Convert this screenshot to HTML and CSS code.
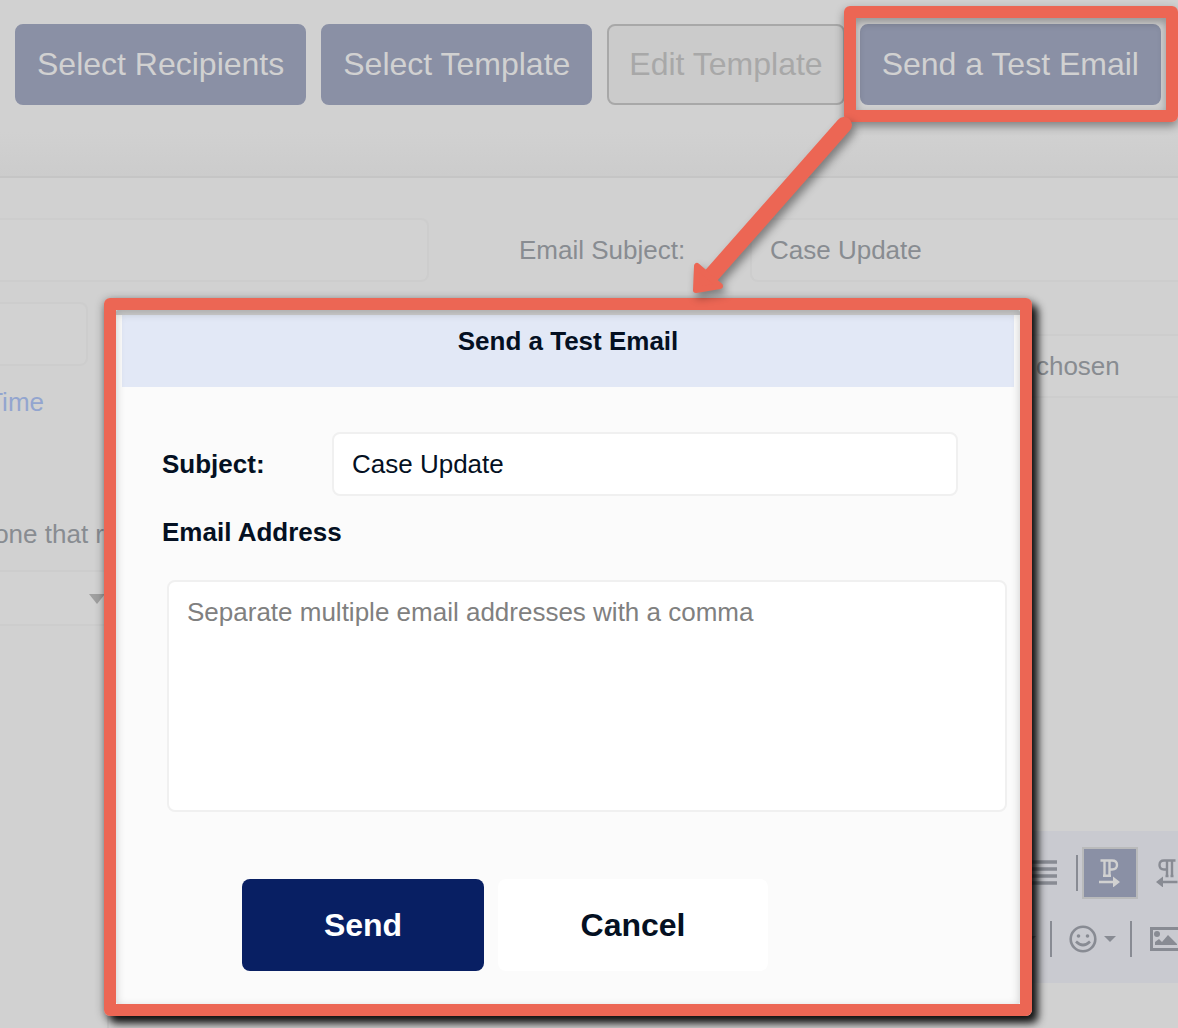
FILE: index.html
```html
<!DOCTYPE html>
<html lang="en">

<head>

<meta charset="utf-8">
<title>Send a Test Email</title>

<link rel="stylesheet" href="styles.css">

</head>

<body>

<div class="page">

   <header class="actions">
      <button class="action" type="button">Select Recipients</button>
      <button class="action" type="button">Select Template</button>
      <button class="action outline" type="button" disabled>Edit Template</button>
      <button class="action" type="button">Send a Test Email</button>
   </header>

   <div class="form">

      <div class="leftcol">
         <input class="field cut" type="text" aria-label="Email name">
         <input class="field cut short" type="text" aria-label="Send date">
         <a class="timelink" href="#">Time</a>
         <label class="note" for="recipient_select">one that r</label>
         <div class="selectwrap">
            <select class="field cut" id="recipient_select"></select>
            <svg class="selectarrow" width="16" height="10" viewBox="0 0 16 10"><path d="M0 0h16l-8 10z"/></svg>
         </div>
      </div>

      <label class="subjectlabel" for="email_subject">Email Subject:</label>

      <div class="rightcol">
         <input class="field open" id="email_subject" type="text" value="Case Update">
         <input class="field open file" type="file" aria-label="Attachment">
      </div>

   </div>

   <div class="editor">
      <div class="toolbar">

         <div class="toolrow">
            <button class="tool" type="button" aria-label="Justify">
               <svg width="28" height="26" viewBox="0 0 28 26"><path d="M0 2h28M0 9h28M0 16h28M0 23h28" fill="none" stroke="currentColor" stroke-width="3.600"/></svg>
            </button>
            <span class="divider"></span>
            <button class="tool active" type="button" aria-label="Left to right">
               <svg width="22" height="28" viewBox="0 0 22 28">
                  <path d="M1.500 1.500h11.500q5 0 5 4.500t-5 4.500h-2M5.500 2v15.500M10.500 2v15.500M4 16.800h8" fill="none" stroke="currentColor" stroke-width="2.400"/>
                  <path d="M0 21.700h14V17.500l7 5.500-7 5.500v-4.200H0z" fill="currentColor"/>
               </svg>
            </button>
            <button class="tool last" type="button" aria-label="Right to left">
               <svg width="22" height="28" viewBox="0 0 22 28">
                  <path d="M19.500 1.500H8Q3.500 1.500 3.500 6T8 10.500h3M11 2v15.500M16 2v15.500M9.500 17h3M14.500 17h3" fill="none" stroke="currentColor" stroke-width="2.400"/>
                  <path d="M21.500 21.700H7V17.500L0 23l7 5.500v-4.200h14.500z" fill="currentColor"/>
               </svg>
            </button>
         </div>

         <div class="toolrow">
            <svg class="caret" width="12" height="6" viewBox="0 0 12 6"><path d="M0 0h12L6 6z"/></svg>
            <span class="divider"></span>
            <button class="tool emoji" type="button" aria-label="Emoticons">
               <svg width="28" height="28" viewBox="0 0 28 28">
                  <circle cx="14" cy="14" r="12.300" fill="none" stroke="currentColor" stroke-width="2.600"/>
                  <circle cx="9.500" cy="11" r="1.800" fill="currentColor"/>
                  <circle cx="18.500" cy="11" r="1.800" fill="currentColor"/>
                  <path d="M7 16.500q7 7 14 0" fill="none" stroke="currentColor" stroke-width="2.600"/>
               </svg>
               <svg class="caret" width="12" height="6" viewBox="0 0 12 6"><path d="M0 0h12L6 6z"/></svg>
            </button>
            <span class="divider"></span>
            <button class="tool last" type="button" aria-label="Insert image">
               <svg width="28" height="24" viewBox="0 0 28 24">
                  <path d="M30 1.500H1.500v21H30" fill="none" stroke="currentColor" stroke-width="3"/>
                  <circle cx="7" cy="7" r="3" fill="currentColor"/>
                  <path d="M5 18v-3l4-3 3 3 6-7 9 9v1z" fill="currentColor"/>
               </svg>
            </button>
         </div>

      </div>
   </div>

</div>

<div class="highlight"></div>

<div class="dialog" role="dialog" aria-labelledby="dialog_title">
   <h2 class="title" id="dialog_title">Send a Test Email</h2>

   <form class="dialogform">
      <div class="row">
         <label class="rowlabel" for="test_subject">Subject:</label>
         <input class="textbox" id="test_subject" type="text" value="Case Update">
      </div>

      <label class="rowlabel" for="test_address">Email Address</label>
      <textarea class="textbox addresses" id="test_address" placeholder="Separate multiple email addresses with a comma"></textarea>

      <div class="buttons">
         <button class="send" type="button">Send</button>
         <button class="cancel" type="button">Cancel</button>
      </div>
   </form>
</div>

<svg class="arrow" width="180" height="200" viewBox="0 0 180 200">
   <path d="M164 25L29 178" fill="none" stroke="#ec6654" stroke-width="16" stroke-linecap="round"/>
   <path d="M17 166L16 190L40 186Z" fill="#ec6654" stroke="#ec6654" stroke-width="6" stroke-linejoin="round"/>
</svg>

</body>

</html>
```

FILE: styles.css
```css
html , body {
   margin:0px;
   padding:0px;
   height:100%;
}

body {
   position:relative;
   overflow:hidden;
   background:#d1d1d1;
   color:#888c91;
   font-family:"Liberation Sans", Arial, sans-serif;
   font-size:26px;
   line-height:30px;
}

* {
   box-sizing:border-box;
}

button , input , select , textarea {
   margin:0px;
   font:inherit;
   color:inherit;
}

svg {
   display:block;
   flex:none;
}

.page {
   display:flex;
   flex-direction:column;
   min-height:100%;
}

/* top buttons */

.actions {
   display:flex;
   align-items:flex-start;
   gap:15px;
   height:178px;
   padding:24px 15px;
   border-bottom:2px solid #c5c5c5;
   background:linear-gradient(#d1d1d1 75%, #cccccc);
}

.action {
   flex:none;
   height:81px;
   padding:0px 20px 2px;
   border:2px solid #8a90a5;
   border-radius:8px;
   background:#8a90a5;
   color:#d1d1d1;
   font-size:32px;
   white-space:nowrap;
}

.action.outline {
   border-color:#a8a8a8;
   background:#cbcbcb;
   color:#a8a8a8;
}

/* form behind the dialog */

.form {
   display:flex;
   align-items:flex-start;
   padding-top:40px;
   height:653px;
}

.leftcol {
   display:flex;
   flex-direction:column;
   width:429px;
}

.field {
   width:100%;
   height:64px;
   padding:0px 18px;
   border:2px solid #cdcdcd;
   border-radius:8px;
   background:#d2d2d2;
}

.field.cut {
   border-left:0px;
   border-radius:0px 8px 8px 0px;
}

.field.short {
   width:88px;
   margin-top:20px;
}

.field.open {
   border-right:0px;
   border-radius:8px 0px 0px 8px;
}

.timelink {
   display:flex;
   justify-content:flex-end;
   width:44px;
   margin-top:21px;
   color:#93a5cf;
   text-decoration:none;
}

.note {
   display:flex;
   justify-content:flex-end;
   width:104px;
   margin-top:102px;
   white-space:nowrap;
}

.selectwrap {
   position:relative;
   width:112px;
   margin-top:21px;
}

.selectwrap .field {
   display:block;
   height:56px;
   appearance:none;
}

.selectarrow {
   position:absolute;
   right:7px;
   top:24px;
   fill:#a0a0a0;
}

.subjectlabel {
   width:321px;
   padding:17px 0px 0px 90px;
}

.rightcol {
   display:flex;
   flex:1;
   flex-direction:column;
   gap:52px;
}

.file::file-selector-button {
   width:181px;
   height:60px;
   margin:0px 4px 0px 0px;
   padding:0px;
   border:0px;
   background:none;
   font:inherit;
   color:inherit;
}

/* text editor */

.editor {
   flex:1;
   margin-left:107px;
   border-left:2px solid #c8c8c8;
}

.toolbar {
   display:flex;
   flex-direction:column;
   gap:14px;
   height:152px;
   padding-top:16px;
   background:#c9cad0;
}

.toolrow {
   display:flex;
   align-items:center;
   justify-content:flex-end;
   height:52px;
}

.tool {
   display:flex;
   align-items:center;
   justify-content:center;
   padding:0px;
   border:0px;
   background:none;
   color:#888b93;
}

.tool.active {
   width:56px;
   height:52px;
   margin-left:4px;
   border:2px solid #b9babb;
   background:#8a90a5;
   color:#d1d1d1;
}

.tool.last {
   margin-left:18px;
}

.tool.emoji {
   gap:7px;
   margin:0px 14px 0px 17px;
}

.caret {
   fill:#888b93;
}

.divider {
   width:2px;
   height:36px;
   margin-left:19px;
   background:#888b93;
}

.caret + .divider {
   margin-left:14px;
}

.emoji + .divider {
   margin-left:0px;
}

/* call-outs */

.highlight {
   position:absolute;
   top:6px;
   right:0px;
   width:334px;
   height:116px;
   border:12px solid #ec6654;
   border-radius:6px;
   box-shadow:0px 4px 10px rgba(0,0,0,0.4), inset 0px 4px 8px rgba(0,0,0,0.3);
   pointer-events:none;
}

.arrow {
   position:absolute;
   top:100px;
   left:680px;
   filter:drop-shadow(3px 5px 4px rgba(0,0,0,0.4));
   pointer-events:none;
}

/* dialog */

.dialog {
   position:absolute;
   top:298px;
   left:104px;
   right:146px;
   border:12px solid #ec6654;
   border-radius:6px;
   padding-top:5px;
   background:linear-gradient(#d1d1d1 5px, #fbfbfb 5px);
   box-shadow:6px 7px 8px rgba(0,0,0,0.9), 0px 2px 10px rgba(0,0,0,0.4);
   color:#041022;
}

/* inner shadow of the frame, over the content */
.dialog::after {
   content:"";
   position:absolute;
   top:0px;
   right:0px;
   bottom:0px;
   left:0px;
   border-radius:2px;
   box-shadow:inset 0px 3px 10px rgba(0,0,0,0.2);
   pointer-events:none;
}

.title {
   height:72px;
   margin:0px 6px;
   padding-top:11px;
   background:#e2e8f6;
   font-size:26px;
   font-weight:bold;
   text-align:center;
}

.dialogform {
   display:flex;
   flex-direction:column;
   padding:45px 13px 33px 46px;
}

.row {
   display:flex;
   align-items:center;
   margin-bottom:21px;
   padding-right:49px;
}

.rowlabel {
   width:170px;
   font-weight:bold;
   white-space:nowrap;
}

.textbox {
   flex:1;
   height:64px;
   padding:0px 18px;
   border:2px solid #f0f0f0;
   border-radius:8px;
   background:#ffffff;
}

.addresses {
   flex:none;
   height:232px;
   margin:33px 0px 67px 5px;
   padding:15px 18px;
   resize:none;
}

.addresses::placeholder {
   color:#808080;
}

.buttons {
   display:flex;
   gap:14px;
   padding-left:80px;
}

.send , .cancel {
   width:242px;
   height:92px;
   border:0px;
   border-radius:8px;
   background:#081f63;
   color:#ffffff;
   font-size:32px;
   font-weight:bold;
}

.cancel {
   width:270px;
   background:#ffffff;
   color:#041022;
}
```
